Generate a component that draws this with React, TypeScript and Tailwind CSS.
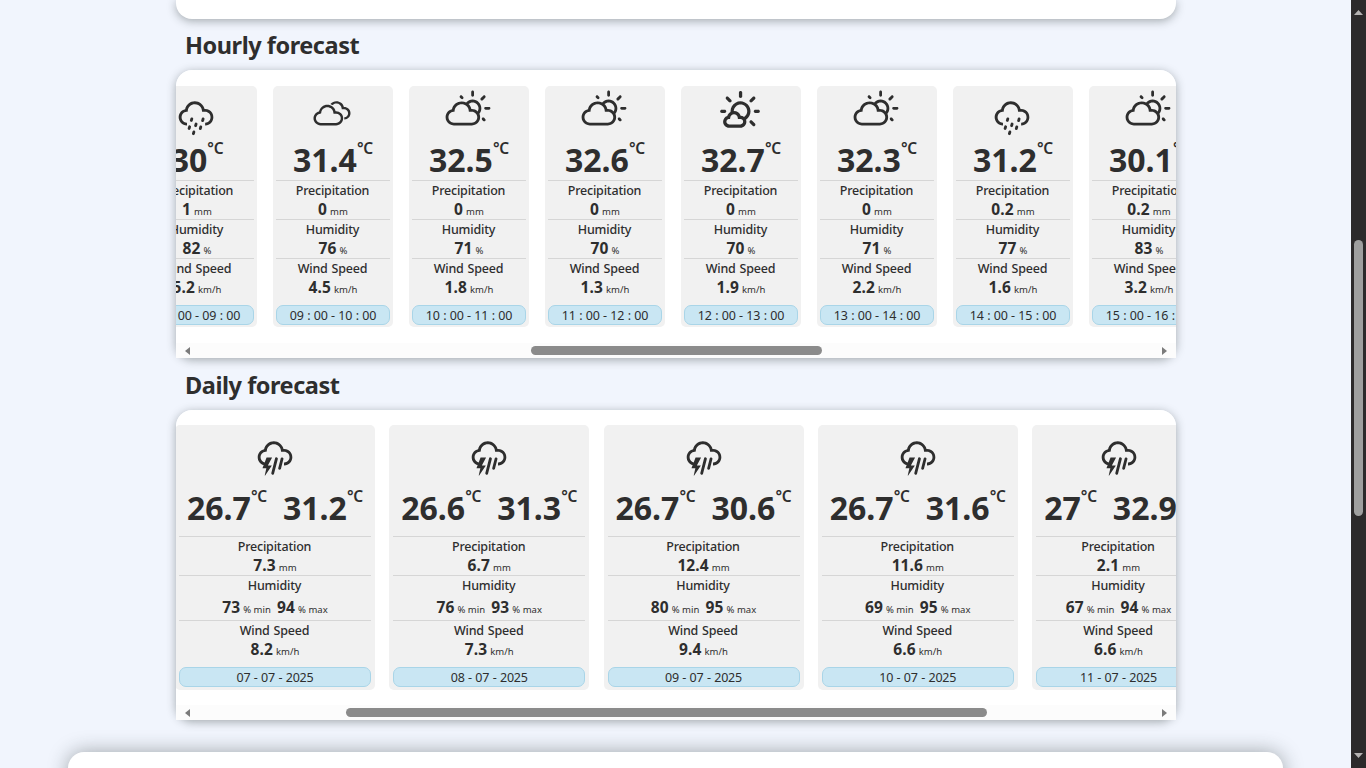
import type { ReactNode } from 'react';
import type { IconType } from 'react-icons';
import { WiShowers, WiThunderstorm, WiCloudy, WiDayCloudy, WiDaySunnyOvercast } from 'react-icons/wi';

type Hour = { icon: IconType; temp: string; rain: string; hum: string; wind: string; time: string };
type Day = { min: string; max: string; rain: string; humMin: string; humMax: string; wind: string; date: string };

const hours: Hour[] = [
  { icon: WiShowers, temp: '30', rain: '1', hum: '82', wind: '5.2', time: '08 : 00 - 09 : 00' },
  { icon: WiCloudy, temp: '31.4', rain: '0', hum: '76', wind: '4.5', time: '09 : 00 - 10 : 00' },
  { icon: WiDayCloudy, temp: '32.5', rain: '0', hum: '71', wind: '1.8', time: '10 : 00 - 11 : 00' },
  { icon: WiDayCloudy, temp: '32.6', rain: '0', hum: '70', wind: '1.3', time: '11 : 00 - 12 : 00' },
  { icon: WiDaySunnyOvercast, temp: '32.7', rain: '0', hum: '70', wind: '1.9', time: '12 : 00 - 13 : 00' },
  { icon: WiDayCloudy, temp: '32.3', rain: '0', hum: '71', wind: '2.2', time: '13 : 00 - 14 : 00' },
  { icon: WiShowers, temp: '31.2', rain: '0.2', hum: '77', wind: '1.6', time: '14 : 00 - 15 : 00' },
  { icon: WiDayCloudy, temp: '30.1', rain: '0.2', hum: '83', wind: '3.2', time: '15 : 00 - 16 : 00' },
];

const days: Day[] = [
  { min: '26.7', max: '31.2', rain: '7.3', humMin: '73', humMax: '94', wind: '8.2', date: '07 - 07 - 2025' },
  { min: '26.6', max: '31.3', rain: '6.7', humMin: '76', humMax: '93', wind: '7.3', date: '08 - 07 - 2025' },
  { min: '26.7', max: '30.6', rain: '12.4', humMin: '80', humMax: '95', wind: '9.4', date: '09 - 07 - 2025' },
  { min: '26.7', max: '31.6', rain: '11.6', humMin: '69', humMax: '95', wind: '6.6', date: '10 - 07 - 2025' },
  { min: '27', max: '32.9', rain: '2.1', humMin: '67', humMax: '94', wind: '6.6', date: '11 - 07 - 2025' },
];

function Temp({ value }: { value: string }) {
  return (
    <div className="flex items-start">
      <span className="text-[32px] font-bold leading-[44px]">{value}</span>
      <span className="text-[15.5px] font-semibold leading-[21px] tracking-[-0.2px]">°C</span>
    </div>
  );
}

function Value({ value, unit }: { value: string; unit: string }) {
  return (
    <span className="whitespace-nowrap">
      <b className="text-[15.5px] font-bold tracking-[0.1px]">{value}</b>
      <span className="ml-[3px] text-[9.5px] tracking-[0.05px]">{unit}</span>
    </span>
  );
}

function Metric({ label, tall, children }: { label: string; tall?: boolean; children: ReactNode }) {
  return (
    <div className={tall ? 'h-[45px] border-t border-[#d6d6d6]' : 'h-[39px] border-t border-[#d6d6d6]'}>
      <div className="h-[19px] pr-px text-center text-[12.5px] font-medium leading-[19px] tracking-[-0.2px] [word-spacing:1px]">{label}</div>
      <div className={tall ? 'mt-[3px] flex h-[19px] justify-center gap-[6px] leading-[18px]' : 'flex h-[19px] justify-center leading-[18px]'}>
        {children}
      </div>
    </div>
  );
}

function Pill({ children }: { children: ReactNode }) {
  return (
    <div className="h-5 whitespace-nowrap rounded-[7px] border border-[#a9d5e8] bg-[#c9e6f3] text-center text-[12.5px] leading-[19px] tracking-[-0.2px] [word-spacing:0.4px]">
      {children}
    </div>
  );
}

function Scrollbar({ children }: { children: ReactNode }) {
  return (
    <div className="flex h-[15px] items-center bg-[#fcfcfc] px-[9px]">
      <svg width="5" height="8" viewBox="0 0 5 8" fill="#7b7b7b"><path d="M5 0v8L0 4z" /></svg>
      <div className="flex-1">{children}</div>
      <svg width="5" height="8" viewBox="0 0 5 8" fill="#7b7b7b"><path d="M0 0v8l5-4z" /></svg>
    </div>
  );
}

export default function App() {
  return (
    <div className="flex h-screen overflow-hidden bg-[#f1f5fd] font-['Noto_Sans',sans-serif] text-[#2e2e2e]">
      <main className="w-[1351px]">
        <section className="ml-[176px] h-[19px] w-[1000px] rounded-b-2xl bg-white shadow-[0_2px_10px_rgba(35,45,45,0.38)]" />
        <h2 className="ml-[185px] h-[51px] pt-[9px] text-[23.5px] font-bold leading-[34px] tracking-[-0.45px]">Hourly forecast</h2>
        <section className="ml-[176px] h-[288px] w-[1000px] rounded-2xl shadow-[0_2px_10px_rgba(35,45,45,0.38)]">
          <div className="flex h-full flex-col overflow-hidden rounded-t-2xl bg-white">
            <div className="-ml-[39px] flex h-[273px] gap-4 pt-4">
              {hours.map((h) => (
                <article key={h.time} className="h-[241px] w-[120px] shrink-0 rounded-[5px] bg-[#f1f1f1] px-[3px]">
                  <div className="flex h-[50px] justify-center pr-[2px] pt-[3px]"><h.icon size={50} className="shrink-0" /></div>
                  <div className="flex h-[44px] justify-center pt-[2px]"><Temp value={h.temp} /></div>
                  <Metric label="Precipitation"><Value value={h.rain} unit="mm" /></Metric>
                  <Metric label="Humidity"><Value value={h.hum} unit="%" /></Metric>
                  <Metric label="Wind Speed"><Value value={h.wind} unit="km/h" /></Metric>
                  <div className="mt-[8px]"><Pill>{h.time}</Pill></div>
                </article>
              ))}
            </div>
            <Scrollbar><div className="ml-[341px] h-[9px] w-[291px] rounded-full bg-[#8b8b8b]" /></Scrollbar>
          </div>
        </section>
        <h2 className="ml-[185px] h-[52px] pt-[10px] text-[23.5px] font-bold leading-[34px] tracking-[-0.45px]">Daily forecast</h2>
        <section className="ml-[176px] h-[310px] w-[1000px] rounded-2xl shadow-[0_2px_10px_rgba(35,45,45,0.38)]">
          <div className="flex h-full flex-col overflow-hidden rounded-t-2xl bg-white">
            <div className="-ml-[1px] flex h-[295px] gap-[14.25px] pt-[15px]">
              {days.map((d) => (
                <article key={d.date} className={d.min === '27' ? 'h-[265px] w-[173px] shrink-0 rounded-[5px] bg-[#f1f1f1] px-1' : 'h-[265px] w-[200px] shrink-0 rounded-[5px] bg-[#f1f1f1] px-1'}>
                  <div className="flex h-[57px] justify-center pt-[4px]"><WiThunderstorm size={50} className="shrink-0" /></div>
                  <div className="flex h-[54px] justify-center gap-[16px] pt-[4px]"><Temp value={d.min} /><Temp value={d.max} /></div>
                  <Metric label="Precipitation"><Value value={d.rain} unit="mm" /></Metric>
                  <Metric label="Humidity" tall><Value value={d.humMin} unit="% min" /><Value value={d.humMax} unit="% max" /></Metric>
                  <Metric label="Wind Speed"><Value value={d.wind} unit="km/h" /></Metric>
                  <div className="mt-[8px]"><Pill>{d.date}</Pill></div>
                </article>
              ))}
            </div>
            <Scrollbar><div className="ml-[156px] h-[9px] w-[641px] rounded-full bg-[#8b8b8b]" /></Scrollbar>
          </div>
        </section>
        <section className="ml-[68px] mt-8 h-[100px] w-[1215px] rounded-t-2xl bg-white shadow-[0_0_20px_rgba(35,45,45,0.4)]" />
      </main>
      <aside className="flex w-[15px] flex-col items-center bg-[#2c2a2b]">
        <svg className="mt-[10px]" width="9" height="5" viewBox="0 0 9 5" fill="#b5b2b2"><path d="M4.500 0 9 5H0z" /></svg>
        <div className="mt-[225px] h-[276px] w-[9px] rounded-full bg-[#9f9f9f]" />
        <svg className="mt-[237px]" width="9" height="5" viewBox="0 0 9 5" fill="#b5b2b2"><path d="M0 0h9L4.500 5z" /></svg>
      </aside>
    </div>
  );
}
